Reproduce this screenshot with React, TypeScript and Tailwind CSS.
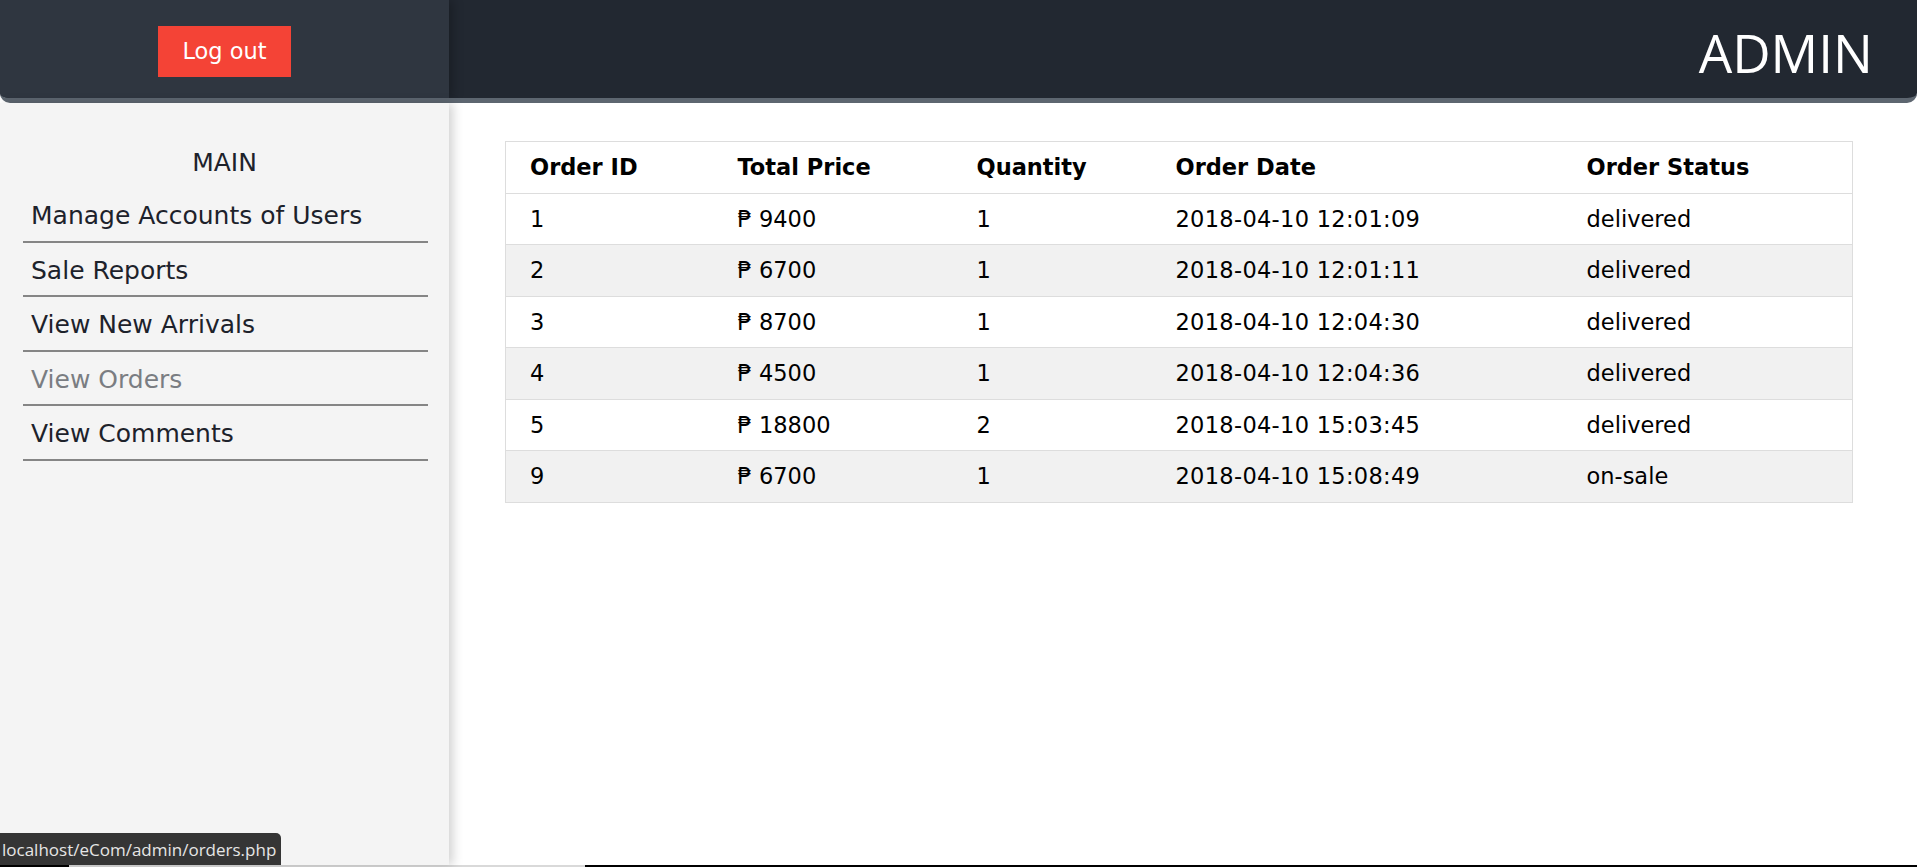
const orders = [
  { id: 1, price: 9400, qty: 1, date: "2018-04-10 12:01:09", status: "delivered" },
  { id: 2, price: 6700, qty: 1, date: "2018-04-10 12:01:11", status: "delivered" },
  { id: 3, price: 8700, qty: 1, date: "2018-04-10 12:04:30", status: "delivered" },
  { id: 4, price: 4500, qty: 1, date: "2018-04-10 12:04:36", status: "delivered" },
  { id: 5, price: 18800, qty: 2, date: "2018-04-10 15:03:45", status: "delivered" },
  { id: 9, price: 6700, qty: 1, date: "2018-04-10 15:08:49", status: "on-sale" },
];

const links = [
  { label: "Manage Accounts of Users", active: false },
  { label: "Sale Reports", active: false },
  { label: "View New Arrivals", active: false },
  { label: "View Orders", active: true },
  { label: "View Comments", active: false },
];

function NavLink({ label, active }: { label: string; active: boolean }) {
  return (
    <li className="border-b-2 border-[#858585]">
      <a
        href="#"
        className={`block pl-2 pt-[13px] pb-[10px] leading-[29.5px] ${
          active ? "text-[#7a7d82]" : "text-[#1d222b]"
        }`}
      >
        {label}
      </a>
    </li>
  );
}

export default function App() {
  return (
    <div className="relative flex h-[867px] flex-col overflow-hidden bg-white font-['DejaVu_Sans',sans-serif]">
      {/* Top bar */}
      <header className="flex h-[103px] shrink-0 overflow-hidden rounded-b-[10px] border-b-[5px] border-[#5d6670] bg-[#222831]">
        <div className="relative z-10 flex w-[449px] shrink-0 items-start justify-center bg-[#2f3640] pt-[26px] shadow-[4px_0_10px_rgba(0,0,0,0.25)]">
          <button className="h-[51px] bg-[#f44336] px-6 text-[22.5px] text-white">
            Log out
          </button>
        </div>
        <div className="flex flex-1 items-center justify-end pt-[6px] pr-[44px]">
          <h1 className="font-['Open_Sans',sans-serif] text-[53px] leading-none text-white">
            ADMIN
          </h1>
        </div>
      </header>

      <div className="flex flex-1">
        {/* Sidebar */}
        <aside className="relative z-10 w-[449px] shrink-0 bg-[#f4f4f4] pt-[45px] text-[25px] shadow-[4px_0_10px_rgba(0,0,0,0.18)]">
          <p className="text-center leading-[29px] text-[#1d222b]">MAIN</p>
          <ul className="mt-[11px] mr-[21px] ml-[23px]">
            {links.map((l) => (
              <NavLink key={l.label} label={l.label} active={l.active} />
            ))}
          </ul>
        </aside>

        {/* Orders table */}
        <main className="flex-1 pt-[38px] pl-[56px]">
          <table className="w-[1348px] border-collapse border border-[#dddddd] text-left text-[22.5px] text-black">
            <thead>
              <tr className="border-b border-[#dddddd]">
                <th className="w-[208px] py-[11px] pl-6 leading-[28.5px]">Order ID</th>
                <th className="w-[239px] py-[11px] pl-6 leading-[28.5px]">Total Price</th>
                <th className="w-[199px] py-[11px] pl-6 leading-[28.5px]">Quantity</th>
                <th className="w-[411px] py-[11px] pl-6 leading-[28.5px]">Order Date</th>
                <th className="py-[11px] pl-6 leading-[28.5px]">Order Status</th>
              </tr>
            </thead>
            <tbody>
              {orders.map((o, i) => (
                <tr
                  key={o.id}
                  className={`border-b border-[#dddddd] ${i % 2 === 1 ? "bg-[#f1f1f1]" : "bg-white"}`}
                >
                  <td className="py-[11px] pl-6 leading-[28.5px]">{o.id}</td>
                  <td className="py-[11px] pl-6 leading-[28.5px]">₱ {o.price}</td>
                  <td className="py-[11px] pl-6 leading-[28.5px]">{o.qty}</td>
                  <td className="py-[11px] pl-6 leading-[28.5px] tracking-[0.3px]">{o.date}</td>
                  <td className="py-[11px] pl-6 leading-[28.5px]">{o.status}</td>
                </tr>
              ))}
            </tbody>
          </table>
        </main>
      </div>

      {/* Taskbar edge */}
      <div className="flex h-[2px] shrink-0 bg-black">
        <div className="ml-[69px] w-[516px] bg-[#d9d9d9]" />
      </div>

      {/* Browser status bubble */}
      <div className="absolute bottom-[2px] left-0 z-20 rounded-tr-[5px] bg-[#353535] py-[3.5px] pr-[5px] pl-[2px] font-['Open_Sans',sans-serif] text-[17px] leading-[25px] text-[#e6e6e6]">
        localhost/eCom/admin/orders.php
      </div>
    </div>
  );
}
